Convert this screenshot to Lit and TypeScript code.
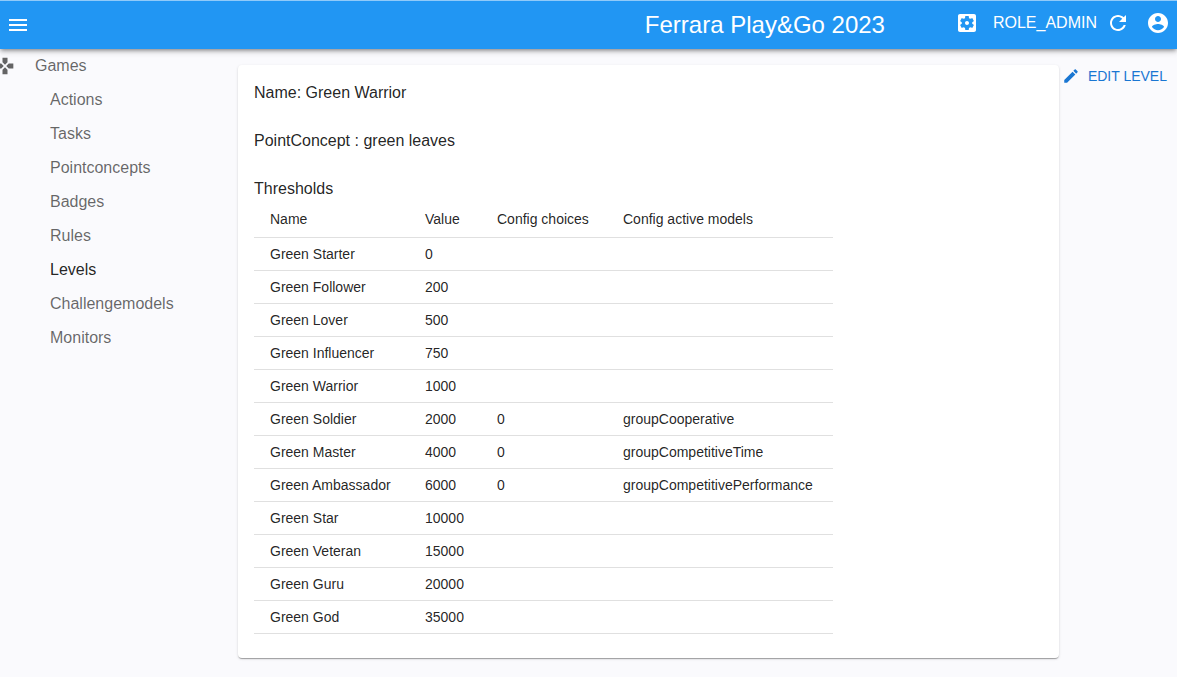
import { LitElement, html, css, svg } from "lit";
import { customElement, property } from "lit/decorators.js";

const ICONS: Record<string, string> = {
  menu: "M3 18h18v-2H3v2zm0-5h18v-2H3v2zm0-7v2h18V6H3z",
  settings:
    "M12 10c-1.1 0-2 .9-2 2s.9 2 2 2 2-.9 2-2-.9-2-2-2zm7-7H5c-1.11 0-2 .9-2 2v14c0 1.1.89 2 2 2h14c1.11 0 2-.9 2-2V5c0-1.1-.89-2-2-2zm-1.75 9c0 .23-.02.46-.05.68l1.48 1.16c.13.11.17.3.08.45l-1.4 2.42c-.09.15-.27.21-.43.15l-1.74-.7c-.36.28-.76.51-1.18.69l-.26 1.85c-.03.17-.18.3-.35.3h-2.8c-.17 0-.32-.13-.35-.29l-.26-1.85c-.43-.18-.82-.41-1.18-.69l-1.74.7c-.16.06-.34 0-.43-.15l-1.4-2.42c-.09-.15-.05-.34.08-.45l1.48-1.16c-.03-.23-.05-.46-.05-.69 0-.23.02-.46.05-.68l-1.48-1.16c-.13-.11-.17-.3-.08-.45l1.4-2.42c.09-.15.27-.21.43-.15l1.74.7c.36-.28.76-.51 1.18-.69l.26-1.85c.03-.17.18-.3.35-.3h2.8c.17 0 .32.13.35.29l.26 1.85c.43.18.82.41 1.18.69l1.74-.7c.16-.06.34 0 .43.15l1.4 2.42c.09.15.05.34-.08.45l-1.48 1.16c.03.23.05.46.05.69z",
  refresh:
    "M17.65 6.35C16.2 4.9 14.21 4 12 4c-4.42 0-7.99 3.58-7.99 8s3.57 8 7.99 8c3.73 0 6.84-2.55 7.73-6h-2.08c-.82 2.33-3.04 4-5.65 4-3.31 0-6-2.69-6-6s2.69-6 6-6c1.66 0 3.14.69 4.22 1.78L13 11h7V4l-2.35 2.35z",
  account:
    "M12 2C6.48 2 2 6.48 2 12s4.48 10 10 10 10-4.48 10-10S17.52 2 12 2zm0 3c1.66 0 3 1.34 3 3s-1.34 3-3 3-3-1.34-3-3 1.34-3 3-3zm0 14.2c-2.5 0-4.71-1.28-6-3.22.03-1.99 4-3.08 6-3.08 1.99 0 5.97 1.09 6 3.08-1.29 1.94-3.5 3.22-6 3.22z",
  games:
    "M15 7.5V2H9v5.5l3 3 3-3zM7.5 9H2v6h5.5l3-3-3-3zM9 16.5V22h6v-5.5l-3-3-3 3zM16.5 9l-3 3 3 3H22V9h-5.5z",
  edit: "M3 17.25V21h3.75L17.81 9.94l-3.75-3.75L3 17.25zM20.71 7.04c.39-.39.39-1.02 0-1.41l-2.34-2.34c-.39-.39-1.02-.39-1.41 0l-1.83 1.83 3.75 3.75 1.83-1.83z",
};

@customElement("ui-icon")
export class UiIcon extends LitElement {
  @property() name = "";

  static styles = css`
    :host {
      display: block;
      flex: none;
      width: 24px;
      height: 24px;
    }
    .glyph {
      display: block;
      width: 100%;
      height: 100%;
      fill: currentColor;
    }
  `;

  render() {
    return html`<svg class="glyph" viewBox="0 0 24 24" aria-hidden="true">
      ${svg`<path d=${ICONS[this.name] ?? ""}></path>`}
    </svg>`;
  }
}

interface Threshold {
  name: string;
  value: number;
  choices?: number;
  models?: string;
}

const THRESHOLDS: Threshold[] = [
  { name: "Green Starter", value: 0 },
  { name: "Green Follower", value: 200 },
  { name: "Green Lover", value: 500 },
  { name: "Green Influencer", value: 750 },
  { name: "Green Warrior", value: 1000 },
  { name: "Green Soldier", value: 2000, choices: 0, models: "groupCooperative" },
  { name: "Green Master", value: 4000, choices: 0, models: "groupCompetitiveTime" },
  { name: "Green Ambassador", value: 6000, choices: 0, models: "groupCompetitivePerformance" },
  { name: "Green Star", value: 10000 },
  { name: "Green Veteran", value: 15000 },
  { name: "Green Guru", value: 20000 },
  { name: "Green God", value: 35000 },
];

const SECTIONS = [
  "Actions",
  "Tasks",
  "Pointconcepts",
  "Badges",
  "Rules",
  "Levels",
  "Challengemodels",
  "Monitors",
];

@customElement("app-root")
export class AppRoot extends LitElement {
  static styles = css`
    :host {
      display: flex;
      flex-direction: column;
      box-sizing: border-box;
      min-height: 100vh;
      background: #fafafd;
      color: rgba(0, 0, 0, 0.87);
      font: 16px/24px "Liberation Sans", Arial, sans-serif;
    }
    button {
      display: flex;
      align-items: center;
      padding: 0;
      border: 0;
      background: none;
      color: inherit;
      font: inherit;
      cursor: pointer;
    }
    a {
      color: inherit;
      text-decoration: none;
    }
    .bar {
      display: flex;
      align-items: center;
      box-sizing: border-box;
      height: 49px;
      padding: 0 7px 0 6px;
      border-top: 1px solid #90caf9;
      background: #2196f3;
      color: #fff;
      box-shadow: 0 2px 4px -1px rgba(0, 0, 0, 0.4), 0 3px 6px rgba(0, 0, 0, 0.16);
      position: relative;
    }
    .title {
      margin: 0 70px 0 auto;
      font-size: 24px;
      font-weight: 400;
      line-height: 32px;
    }
    .tools {
      display: flex;
      align-items: center;
      padding-bottom: 4px;
    }
    .role {
      gap: 14px;
      margin-right: 9px;
    }
    .account {
      margin-left: 16px;
    }
    .body {
      display: flex;
      align-items: flex-start;
      flex: 1;
    }
    .side {
      flex: none;
      width: 238px;
      color: rgba(0, 0, 0, 0.6);
    }
    .list {
      margin: 0;
      padding: 0;
      list-style: none;
    }
    .link {
      display: flex;
      align-items: center;
      padding: 5px 0 5px 50px;
    }
    .link.top {
      gap: 20px;
      padding-left: 0;
    }
    .link.current {
      color: rgba(0, 0, 0, 0.87);
    }
    .games {
      width: 20px;
      height: 20px;
      margin-left: -5px;
    }
    .card {
      flex: 1;
      min-width: 0;
      box-sizing: border-box;
      margin: 16px 0;
      padding: 16px 16px 24px;
      border-radius: 4px;
      background: #fff;
      box-shadow: 0 2px 1px -1px rgba(0, 0, 0, 0.2), 0 1px 1px rgba(0, 0, 0, 0.14),
        0 1px 3px rgba(0, 0, 0, 0.12);
    }
    .line {
      margin: 0 0 24px;
    }
    .heading {
      margin: 0;
      font-size: 16px;
      font-weight: 400;
    }
    .grid {
      table-layout: fixed;
      width: 579px;
      max-width: 100%;
      border-collapse: separate;
      border-spacing: 0;
      font-size: 14px;
      line-height: 20px;
    }
    .grid th,
    .grid td {
      box-sizing: border-box;
      padding: 6px 16px;
      border-bottom: 1px solid #e0e0e0;
      font-weight: 400;
      text-align: left;
      white-space: nowrap;
    }
    .grid td {
      height: 33px;
    }
    .grid th {
      height: 37px;
      line-height: 24px;
    }
    .c-name {
      width: 155px;
    }
    .c-value {
      width: 72px;
    }
    .c-choices {
      width: 126px;
    }
    .aside {
      flex: none;
      padding: 15px 10px 0 3px;
    }
    .edit {
      gap: 8px;
      color: #1976d2;
      font-size: 14px;
      text-transform: uppercase;
      white-space: nowrap;
    }
    .pencil {
      width: 18px;
      height: 18px;
    }
  `;

  render() {
    return html`
      <header class="bar">
        <button type="button" aria-label="Toggle menu"><ui-icon name="menu"></ui-icon></button>
        <h1 class="title">Ferrara Play&amp;Go 2023</h1>
        <div class="tools">
          <button type="button" class="role">
            <ui-icon name="settings"></ui-icon><span>ROLE_ADMIN</span>
          </button>
          <button type="button" aria-label="Refresh"><ui-icon name="refresh"></ui-icon></button>
          <button type="button" class="account" aria-label="Profile">
            <ui-icon name="account"></ui-icon>
          </button>
        </div>
      </header>
      <div class="body">
        <nav class="side">
          <a class="link top" href="#games"><ui-icon class="games" name="games"></ui-icon>Games</a>
          <ul class="list">
            ${SECTIONS.map(
              (s) => html`<li>
                <a class="link ${s === "Levels" ? "current" : ""}" href="#${s.toLowerCase()}">${s}</a>
              </li>`
            )}
          </ul>
        </nav>
        <main class="card">
          <p class="line">Name: Green Warrior</p>
          <p class="line">PointConcept : green leaves</p>
          <h2 class="heading">Thresholds</h2>
          <table class="grid">
            <thead>
              <tr>
                <th class="c-name" scope="col">Name</th>
                <th class="c-value" scope="col">Value</th>
                <th class="c-choices" scope="col">Config choices</th>
                <th scope="col">Config active models</th>
              </tr>
            </thead>
            <tbody>
              ${THRESHOLDS.map(
                (t) => html`<tr>
                  <td>${t.name}</td>
                  <td>${t.value}</td>
                  <td>${t.choices ?? ""}</td>
                  <td>${t.models ?? ""}</td>
                </tr>`
              )}
            </tbody>
          </table>
        </main>
        <div class="aside">
          <button type="button" class="edit">
            <ui-icon class="pencil" name="edit"></ui-icon>Edit level
          </button>
        </div>
      </div>
    `;
  }
}
